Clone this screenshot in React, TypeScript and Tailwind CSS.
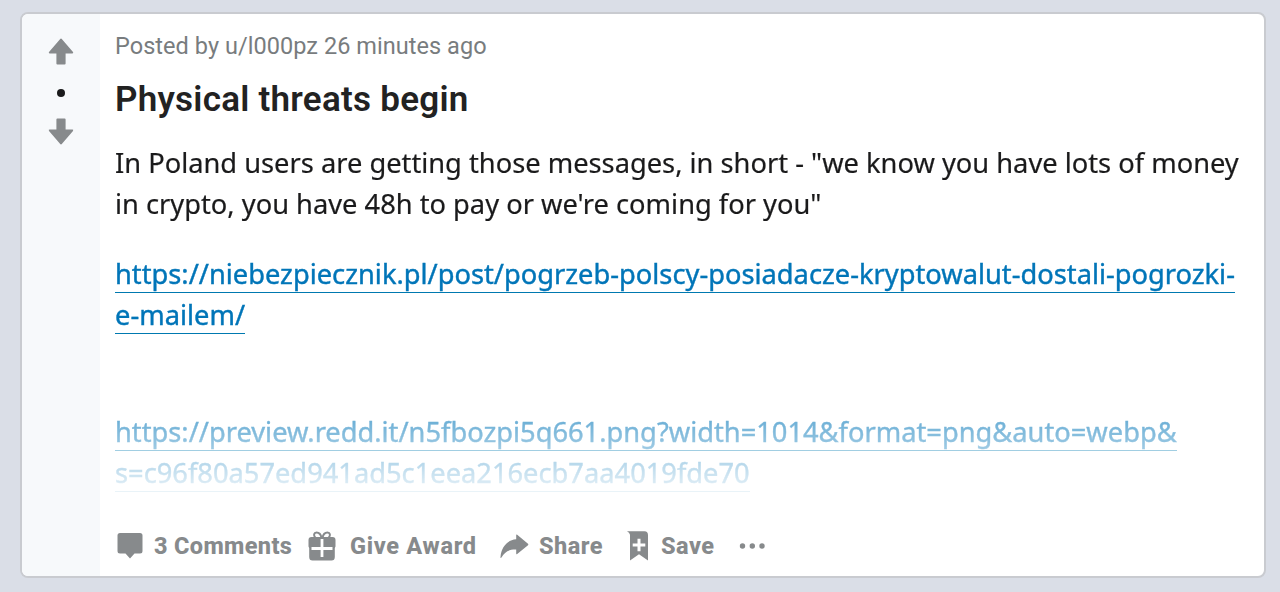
import React from 'react';

function VoteArrow({ down = false }: { down?: boolean }) {
  return (
    <svg width="26" height="27" viewBox="0 0 26 27" className={down ? 'rotate-180' : ''} fill="#878a8c">
      <path d="M12 1.2Q13 0 14 1.2L25 14Q25.8 15.4 24.3 15.4H17.6V25.4Q17.6 26.4 16.6 26.4H9.4Q8.4 26.4 8.4 25.4V15.4H1.7Q.2 15.4 1 14Z" />
    </svg>
  );
}

function CommentIcon() {
  return (
    <svg width="26" height="26" viewBox="0 0 26 26" fill="currentColor">
      <path d="M3 0H23Q25.5 0 25.5 2.5V18Q25.5 20.5 23 20.5H17.5L13 25.4L8.5 20.5H3Q.5 20.5 .5 18V2.5Q.5 0 3 0Z" />
    </svg>
  );
}

function GiftIcon() {
  return (
    <svg width="28" height="30" viewBox="0 0 28 30">
      <path d="M7.500 7C5 4.500 6 1.500 8.500 1.500C11 1.500 13 4 13.500 7M20.500 7C23 4.500 22 1.500 19.500 1.500C17 1.500 15 4 14.500 7" fill="none" stroke="currentColor" strokeWidth="2" />
      <path d="M3.5 6H24.5Q27.5 6 27.5 9V15.5L26.8 17V26Q26.8 29.5 23.5 29.5H4.5Q1.2 29.5 1.2 26V17L.5 15.5V9Q.5 6 3.5 6Z" fill="currentColor" />
      <path d="M14 8V26M3.500 17.500H24.500" stroke="#fff" strokeWidth="2.800" />
    </svg>
  );
}

function ShareIcon() {
  return (
    <svg width="29" height="25" viewBox="0 0 29 25" fill="currentColor">
      <path d="M16.2 1.1Q16.2-.1 17.2.8L28 9.7Q28.7 10.5 28 11.2L17.2 20Q16.2 20.7 16.2 19.5V15.5C9 15.2 4.5 18 1.5 23.6Q.3 24.8.5 23C1.3 13.3 7 6 16.2 5.3Z" />
    </svg>
  );
}

function SaveIcon() {
  return (
    <svg width="22" height="30" viewBox="0 0 22 30">
      <path d="M0 .3H17.5Q21 .5 21 4V29.5L12 23.3L3 29.5V3.8Q2.5 1.6 0 .3Z" fill="currentColor" />
      <path d="M12 7.7V20.3M5.7 14H18.3" stroke="#fff" strokeWidth="3" />
    </svg>
  );
}

function MoreIcon() {
  return (
    <svg width="26" height="6" viewBox="0 0 26 6" fill="currentColor">
      <circle cx="3.500" cy="3" r="2.700" />
      <circle cx="13.300" cy="3" r="2.700" />
      <circle cx="23" cy="3" r="2.700" />
    </svg>
  );
}

const linkClass = 'border-b border-[#0079b0] text-[#0075b8] [-webkit-text-stroke:0.4px_#0075b8]';

export default function App() {
  return (
    <div className="h-[592px] w-[1280px] overflow-hidden bg-[#dadee7] pt-3 pl-5">
      <article className="flex h-[566px] w-[1246px] overflow-hidden rounded-[8px] border-2 border-[#c9cbd0] bg-white">
        <div className="flex w-[78px] shrink-0 flex-col items-center bg-[#f7f9fb] pt-[24px] pr-[1px]">
          <VoteArrow />
          <span className="mt-[24px] mb-[21px] size-2 rounded-full bg-[#1a1a1b]" />
          <VoteArrow down />
        </div>

        <div className="min-w-0 flex-1 pl-[15px] font-['Noto_Sans',sans-serif]">
          <p className="mt-[16px] h-8 whitespace-nowrap font-['Roboto',sans-serif] text-[23.5px] leading-8 tracking-[0.05px] text-[#787c7e]">
            Posted by u/l000pz 26 minutes ago
          </p>
          <h1 className="mt-[16px] h-11 whitespace-nowrap font-['Roboto',sans-serif] text-[35px] leading-11 font-semibold tracking-[0.25px] text-[#222222]">
            Physical threats begin
          </h1>

          <div className="mt-[20px] h-[362px] text-[27.27px] leading-[41px] whitespace-nowrap text-[#1a1a1b] [-webkit-text-stroke:0.2px_#1a1a1b] [mask-image:linear-gradient(180deg,#000_60%,transparent)]">
            <p>
              In Poland users are getting those messages, in short - "we know you have lots of money
              <br />
              in crypto, you have 48h to pay or we're coming for you"
            </p>
            <p className="mt-[29px]">
              <a className={linkClass}>
                https://niebezpiecznik.pl/post/pogrzeb-polscy-posiadacze-kryptowalut-dostali-pogrozki-
                <br />
                e-mailem/
              </a>
            </p>
            <p className="mt-[76px]">
              <a className={linkClass}>
                https://preview.redd.it/n5fbozpi5q661.png?width=1014&amp;format=png&amp;auto=webp&amp;
                <br />
                s=c96f80a57ed941ad5c1eea216ecb7aa4019fde70
              </a>
            </p>
          </div>

          <div className="mt-[18px] flex h-12 items-center whitespace-nowrap font-['Roboto',sans-serif] text-[23.5px] font-extrabold text-[#878a8c]">
            <div className="flex w-[193px] items-center gap-[11px] pl-[2px]">
              <CommentIcon />
              <span className="pt-[2px] tracking-[0.35px]">3 Comments</span>
            </div>
            <div className="flex w-[192px] items-center gap-[14px]">
              <GiftIcon />
              <span className="pt-[2px] tracking-[0.7px]">Give Award</span>
            </div>
            <div className="flex w-[127px] items-center gap-[10px]">
              <ShareIcon />
              <span className="pt-[2px] tracking-[0.5px]">Share</span>
            </div>
            <div className="flex w-[112px] items-center gap-[12px]">
              <SaveIcon />
              <span className="pt-[2px] tracking-[0.5px]">Save</span>
            </div>
            <MoreIcon />
          </div>
        </div>
      </article>
    </div>
  );
}
